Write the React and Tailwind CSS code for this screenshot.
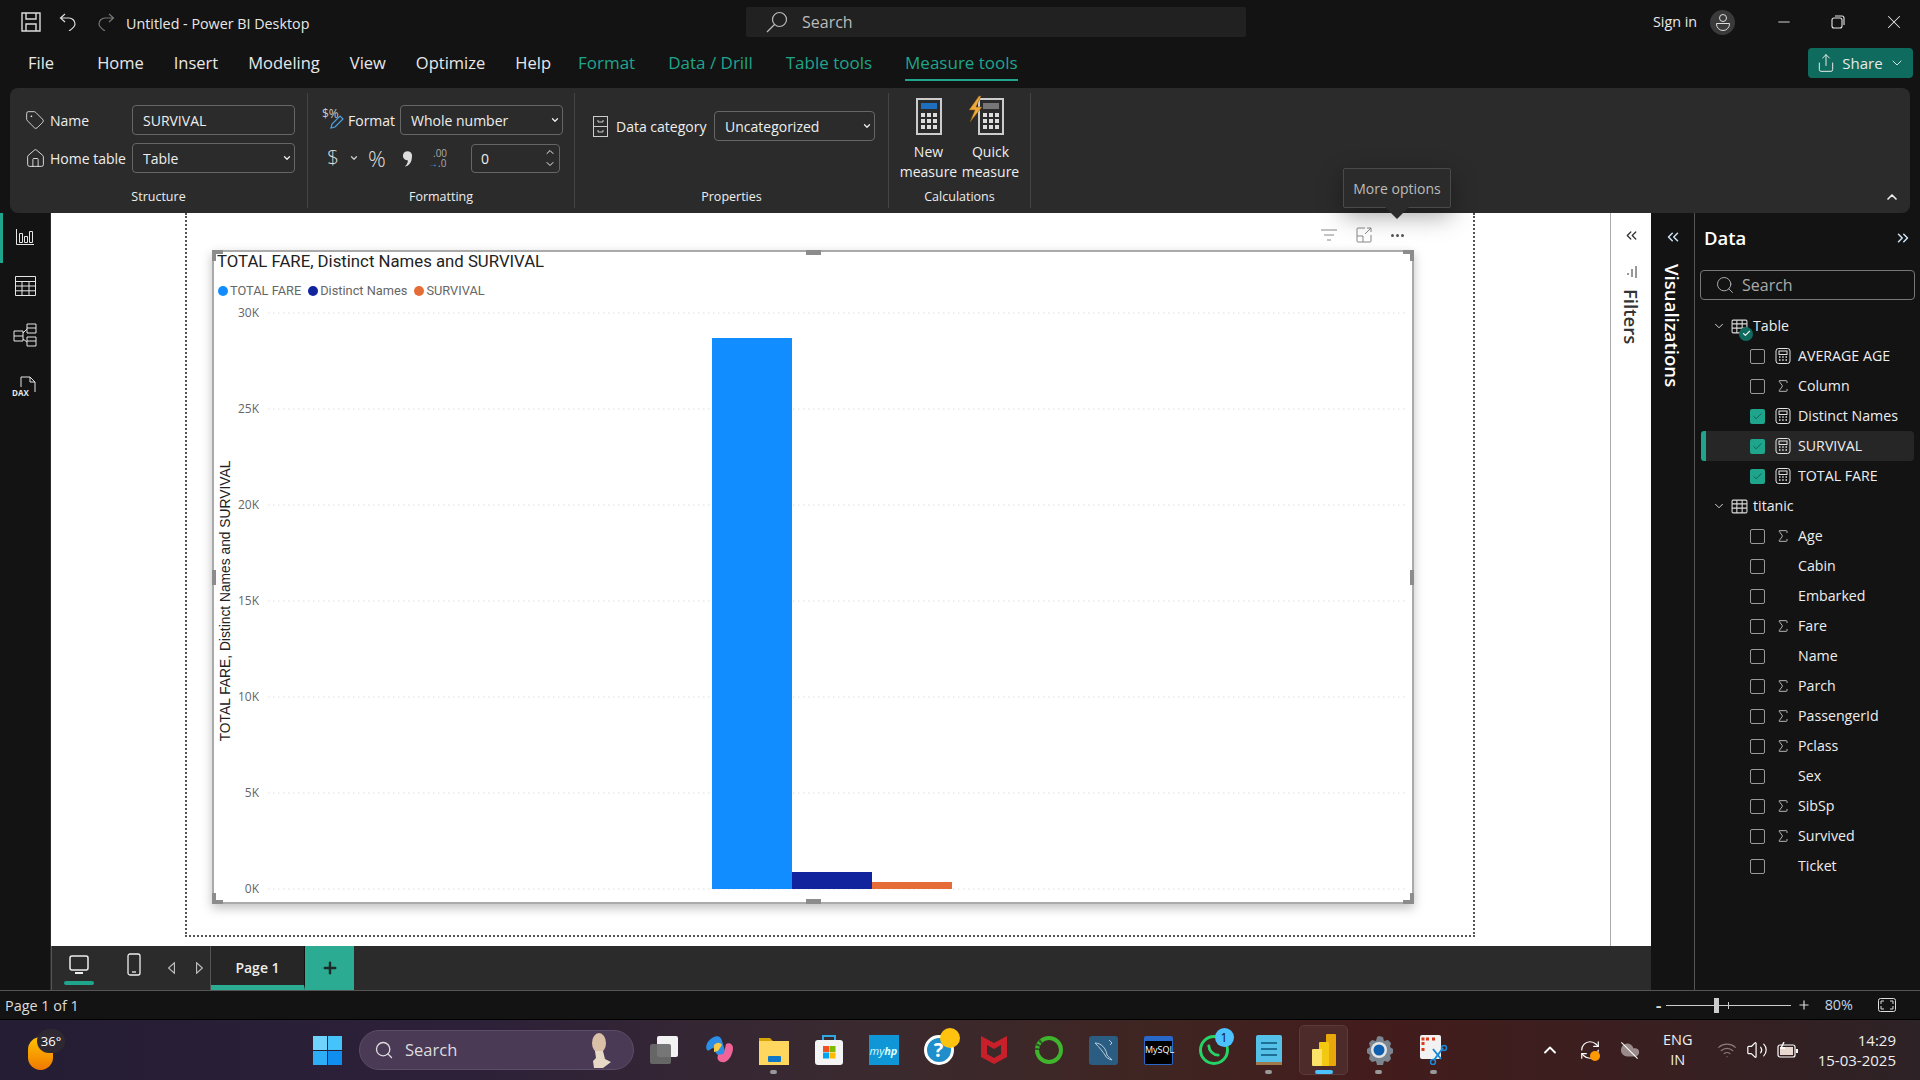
import { Search, X, Minus, ChevronDown, ChevronUp, ChevronsLeft, ChevronsRight, Tag, Home, Share, Sigma, Plus, Check, Wifi, Volume2, RefreshCw, Cloud } from 'lucide-react';

const FONT = { fontFamily: '"Open Sans", "Noto Sans", sans-serif' };

const tables = [
  {
    name: 'Table', check: true, fields: [
      { name: 'AVERAGE AGE', icon: 'calc' },
      { name: 'Column', icon: 'sum' },
      { name: 'Distinct Names', icon: 'calc', on: true },
      { name: 'SURVIVAL', icon: 'calc', on: true, selected: true },
      { name: 'TOTAL FARE', icon: 'calc', on: true },
    ],
  },
  {
    name: 'titanic', fields: [
      { name: 'Age', icon: 'sum' }, { name: 'Cabin' }, { name: 'Embarked' }, { name: 'Fare', icon: 'sum' }, { name: 'Name' },
      { name: 'Parch', icon: 'sum' }, { name: 'PassengerId', icon: 'sum' }, { name: 'Pclass', icon: 'sum' }, { name: 'Sex' },
      { name: 'SibSp', icon: 'sum' }, { name: 'Survived', icon: 'sum' }, { name: 'Ticket' },
    ],
  },
];

const gridLines = [['30K', 11], ['25K', 107], ['20K', 203], ['15K', 299], ['10K', 395], ['5K', 491], ['0K', 587]];

function TableIcon({ className }) {
  return (
    <svg viewBox="0 0 16 16" className={className} fill="none" stroke="currentColor" strokeWidth="1">
      <rect x="1" y="2" width="14" height="12" rx="1" />
      <path d="M1 5.5h14M1 9.5h14M5.5 2v12M10.5 2v12" />
    </svg>
  );
}

function CalcIcon() {
  return (
    <svg viewBox="0 0 16 16" className="w-4 h-4 text-[#e4e4e4]" fill="none" stroke="currentColor" strokeWidth="1">
      <rect x="1" y="0.5" width="14" height="15" rx="2.5" />
      <rect x="4" y="3" width="8" height="3.5" />
      <path d="M4 9h1.5M7.2 9h1.5M10.5 9h1.5M4 12h1.5M7.2 12h1.5M10.5 12h1.5" strokeWidth="1.5" />
    </svg>
  );
}

function Chevron({ className = '' }) {
  return <ChevronDown size={10} strokeWidth={3} className={className} />;
}

function Select({ text, className }) {
  return (
    <div className={`h-[30px] flex items-center justify-between pl-[10px] pr-[2px] border border-[#666] rounded-[4px] text-[14px] text-[#eee] ${className}`}>
      <span>{text}</span>
      <Chevron />
    </div>
  );
}

function RibbonGroup({ label, className, children }) {
  return (
    <div className={`flex flex-col border-r border-[#444] my-[5px] ${className}`}>
      <div className="flex-1">{children}</div>
      <div className="text-center text-[12.5px] text-[#eee] h-[20px] leading-[20px] mb-[1px]">{label}</div>
    </div>
  );
}

function CalcLarge({ quick }) {
  return (
    <svg viewBox="0 0 34 38" className="w-[34px] h-[38px] overflow-visible">
      <rect x="5" y="1" width="24" height="35" fill="#2b2b2b" stroke="#ccc" strokeWidth="2" />
      <rect x="9" y="5" width="16" height="6" fill={quick ? '#777' : '#1e70bf'} />
      {[15, 21, 27].map(y => [0, 6, 12].map(x => <rect key={`${x}-${y}`} x={9 + x} y={y} width="4" height="4" fill="#ddd" />))}
      {quick && <path d="M5 -2 L-5 12 L1 12 L-4 24 L8 9 L2 9 L7 -2 Z" fill="#f0a83a" stroke="#7a5210" strokeWidth="0.5" />}
    </svg>
  );
}

function TitleBar() {
  return (
    <div className="h-[44px] flex items-center text-[#e8e8e8]">
      <svg viewBox="0 0 20 20" className="w-[20px] h-[20px] ml-[21px] text-[#ddd]" fill="none" stroke="currentColor" strokeWidth="1.4">
        <path d="M1 1h18v18H1z" />
        <path d="M5 1v6h10V1M5 19v-7h10v7" />
      </svg>
      <svg viewBox="0 0 18 18" className="w-[18px] h-[18px] ml-[18px] text-[#ddd]" fill="none" stroke="currentColor" strokeWidth="1.2">
        <path d="M6 1 1.5 5 6 9M1.5 5H10a6 6 0 0 1 6 6c0 3-3 5-6 7" />
      </svg>
      <svg viewBox="0 0 18 18" className="w-[18px] h-[18px] ml-[20px] text-[#777] -scale-x-100" fill="none" stroke="currentColor" strokeWidth="1.2">
        <path d="M6 1 1.5 5 6 9M1.5 5H10a6 6 0 0 1 6 6c0 3-3 5-6 7" />
      </svg>
      <span className="ml-[11px] w-[201px] text-[14.3px] pt-[4px]">Untitled - Power BI Desktop</span>
      <div className="ml-[419px] w-[500px] h-[30px] bg-[#212121] rounded-[2px] flex items-center pl-[20px] text-[16px] text-[#bbb]">
        <svg viewBox="0 0 22 22" className="w-[22px] h-[22px]" fill="none" stroke="currentColor" strokeWidth="1.2">
          <circle cx="13.5" cy="8.5" r="7" />
          <path d="M8.5 13.5 1 21" />
        </svg>
        <span className="ml-[14px]">Search</span>
      </div>
      <span className="ml-[407px] text-[14.3px]">Sign in</span>
      <div className="ml-[13px] w-[25px] h-[25px] rounded-full bg-[#3a3a3a] flex flex-col items-center justify-center text-[#ddd]">
        <div className="w-[8px] h-[8px] rounded-full border border-[#ddd]" />
        <div className="w-[14px] h-[8px] rounded-b-full border border-[#ddd] mt-[1px]" />
      </div>
      <Minus size={18} strokeWidth={1.2} className="ml-[40px]" />
      <svg viewBox="0 0 14 14" className="w-[14px] h-[14px] ml-[38px]" fill="none" stroke="currentColor" strokeWidth="1.1">
        <rect x="1" y="3" width="10" height="10" rx="2" />
        <path d="M4 1h7a2 2 0 0 1 2 2v7" />
      </svg>
      <X size={22} strokeWidth={1.1} className="ml-[38px]" />
    </div>
  );
}

function TabRow() {
  const plain = ['Home', 'Insert', 'Modeling', 'View', 'Optimize', 'Help'];
  const context = ['Data / Drill', 'Table tools'];
  return (
    <div className="h-[44px] flex items-center text-[16.5px] text-[#e8e8e8] pb-[6px]">
      <span className="ml-[28px] mr-[43px]">File</span>
      <div className="flex items-center gap-[30px]">
        {plain.map(t => <span key={t}>{t}</span>)}
      </div>
      <div className="flex items-center gap-[33px] ml-[27px] text-[17px] font-medium text-[#1fa58c]">
        <span>Format</span>
        {context.map(t => <span key={t}>{t}</span>)}
        <span className="relative">
          Measure tools
          <span className="absolute left-0 right-0 -bottom-[5px] h-[2px] bg-[#1fa58c]" />
        </span>
      </div>
      <div className="ml-auto mr-[7px] w-[105px] h-[30px] bg-[#0e6b5d] rounded-[4px] flex items-center justify-center gap-[6px] text-[15px] font-normal">
        <Share size={20} strokeWidth={1.2} />
        <span>Share</span>
        <ChevronDown size={16} strokeWidth={1.4} />
      </div>
    </div>
  );
}

function Ribbon() {
  return (
    <div className="h-[125px] mx-[10px] bg-[#2b2b2b] rounded-[8px] flex text-[14px] text-[#eee]">
      <RibbonGroup label="Structure" className="w-[298px]">
        <div className="pt-[12px] pl-[15px] flex flex-col gap-[8px]">
          <div className="flex items-center h-[30px]">
            <Tag size={20} strokeWidth={1} />
            <span className="ml-[5px] w-[82px]">Name</span>
            <div className="w-[163px] h-[30px] border border-[#666] rounded-[4px] pl-[10px] leading-[30px]">SURVIVAL</div>
          </div>
          <div className="flex items-center h-[30px]">
            <Home size={21} strokeWidth={1} />
            <span className="ml-[4px] w-[82px]">Home table</span>
            <Select text="Table" className="w-[163px]" />
          </div>
        </div>
      </RibbonGroup>
      <RibbonGroup label="Formatting" className="w-[267px]">
        <div className="pt-[12px] flex flex-col gap-[8px]">
          <div className="flex items-center h-[30px] pl-[14px]">
            <span className="relative w-[22px] h-[24px] text-[12px] leading-[14px] text-[#ccc] -mt-[3px]">
              $%
              <svg viewBox="0 0 14 14" className="absolute left-[8px] top-[8px] w-[14px] h-[14px]" fill="none" stroke="#4ba3e3" strokeWidth="1.2">
                <path d="M1 13l1-4 8-8 3 3-8 8z" />
              </svg>
            </span>
            <span className="ml-[4px] w-[52px]">Format</span>
            <Select text="Whole number" className="w-[163px]" />
          </div>
          <div className="flex items-center h-[30px] pl-[19px]">
            <span className="text-[21px] w-[22px] font-light text-[#ddd]">$</span>
            <Chevron className="text-[#ccc]" />
            <span className="ml-[9px] text-[22px] w-[34px] font-light text-[#ddd]">%</span>
            <svg viewBox="0 0 12 18" className="w-[11px] h-[17px] text-[#ddd]" fill="currentColor">
              <circle cx="6" cy="6" r="5" />
              <path d="M10.5 7C11.5 13 7 17 3 18 6 15 7 12 6 10z" />
            </svg>
            <div className="ml-[15px] w-[43px] text-[10px] leading-[10px] text-[#aaa] flex flex-col">
              <span className="pl-[5px]">.00</span>
              <span><span className="text-[#4ba3e3]">→</span>.0</span>
            </div>
            <div className="w-[89px] h-[29px] border border-[#666] rounded-[4px] pl-[9px] pr-[3px] flex items-center justify-between">
              <span>0</span>
              <div className="flex flex-col">
                <ChevronUp size={12} strokeWidth={2} />
                <ChevronDown size={12} strokeWidth={2} />
              </div>
            </div>
          </div>
        </div>
      </RibbonGroup>
      <RibbonGroup label="Properties" className="w-[314px]">
        <div className="pt-[18px] pl-[18px] flex items-center">
          <svg viewBox="0 0 15 21" className="w-[15px] h-[21px] text-[#ccc]" fill="none" stroke="currentColor" strokeWidth="1">
            <rect x="0.5" y="0.5" width="14" height="20" />
            <path d="M0.5 10.5h14M5 4v2h5V4M5 14v2h5v-2" />
          </svg>
          <span className="ml-[8px] w-[98px]">Data category</span>
          <Select text="Uncategorized" className="w-[161px]" />
        </div>
      </RibbonGroup>
      <RibbonGroup label="Calculations" className="w-[142px]">
        <div className="flex justify-center gap-[4px] pt-[5px] text-center leading-[20px]">
          <div className="w-[58px] flex flex-col items-center">
            <CalcLarge />
            <span className="mt-[6px]">New measure</span>
          </div>
          <div className="w-[58px] flex flex-col items-center">
            <CalcLarge quick />
            <span className="mt-[6px]">Quick measure</span>
          </div>
        </div>
      </RibbonGroup>
      <div className="flex-1 flex items-end justify-end pr-[10px] pb-[8px]">
        <ChevronUp size={16} strokeWidth={2.5} />
      </div>
    </div>
  );
}

function LeftRail() {
  return (
    <div className="w-[51px] flex flex-col text-[#e6e6e6] border-r border-[#2c2c2c]">
      <div className="h-[50px] border-l-[3px] border-[#1fa58c] flex items-center justify-center pr-[3px] pb-[2px]">
        <svg viewBox="0 0 18 16" className="w-[18px] h-[16px]" fill="none" stroke="currentColor">
          <path d="M0.5 0v15.5H18M3.5 4.5h3v9h-3zM8.5 7.5h3v6h-3zM13.5 2.5h3v11h-3z" />
        </svg>
      </div>
      <div className="h-[46px] flex items-center justify-center">
        <svg viewBox="0 0 21 20" className="w-[21px] h-[20px]" fill="none" stroke="currentColor">
          <path d="M0.5 0.5h20v19h-20zM0.5 5.5h20M0.5 10h20M0.5 14.8h20M7 5.5v14M14 5.5v14" />
        </svg>
      </div>
      <div className="h-[52px] flex items-center justify-center">
        <svg viewBox="0 0 24 24" className="w-[24px] h-[24px]" fill="none" stroke="currentColor">
          <path d="M1 8h9v10H1zM1 13h9M14 1h9v9h-9zM14 5h9M14 14h9v9h-9zM14 18h9M10 10l4-4M10 16l4 3" />
        </svg>
      </div>
      <div className="h-[50px] flex items-center justify-center relative">
        <svg viewBox="0 0 20 20" className="w-[20px] h-[20px] ml-[4px]" fill="none" stroke="currentColor">
          <path d="M4 11V1h9l5 5v10M13 1v5h5" />
        </svg>
        <span className="absolute left-[12px] top-[28px] text-[8px] font-bold leading-none">DAX</span>
      </div>
    </div>
  );
}

function BarChart() {
  return (
    <svg width="1198" height="600" className="block">
      <text x="12" y="299" transform="rotate(-90 12 299)" textAnchor="middle" dominantBaseline="middle" fontFamily="Liberation Sans" fontSize="13.8" fill="#222">TOTAL FARE, Distinct Names and SURVIVAL</text>
      {gridLines.map(([label, y]) => (
        <g key={label}>
          <text x="45" y={y + 4} textAnchor="end" fontFamily="Open Sans" fontSize="12" fill="#666">{label}</text>
          <line x1="54" x2="1192" y1={y} y2={y} stroke="#ddd" strokeDasharray="1.5 3.5" />
        </g>
      ))}
      <rect x="498" y="36" width="80" height="551" fill="#118dff" />
      <rect x="578" y="570" width="80" height="17" fill="#12239e" />
      <rect x="658" y="580" width="80" height="7" fill="#e66c37" />
    </svg>
  );
}

function Handle({ className }) {
  return <div className={`absolute bg-[#8c8c8c] ${className}`} />;
}

function Canvas() {
  return (
    <div className="flex-1 bg-white relative overflow-hidden">
      <div className="ml-[134px] w-[1290px] h-[724px] border-x-2 border-b-2 border-dotted border-[#555]">
        <div className="h-[37px] flex items-end justify-end pr-[69px] pb-[7px] gap-[19px] text-[#888]">
          <svg viewBox="0 0 16 12" className="w-[16px] h-[12px] mb-[2px]" stroke="currentColor" fill="none">
            <path d="M0 1h16M3 6h10M6 11h4" />
          </svg>
          <svg viewBox="0 0 16 16" className="w-[16px] h-[16px]" stroke="currentColor" fill="none">
            <path d="M9 1H2a1 1 0 0 0-1 1v12a1 1 0 0 0 1 1h12a1 1 0 0 0 1-1V8M1 9h6v6M9 7l6-6M11 1h4v4" />
          </svg>
          <div className="flex gap-[2px] mb-[6px]">
            <span className="w-[3px] h-[3px] rounded-full bg-[#555]" />
            <span className="w-[3px] h-[3px] rounded-full bg-[#555]" />
            <span className="w-[3px] h-[3px] rounded-full bg-[#555]" />
          </div>
        </div>
        <div className="ml-[25px] w-[1202px] h-[654px] border-2 border-[#aaa] relative shadow-[0_4px_10px_rgba(0,0,0,0.25)] bg-white">
          <div className="h-[20px] pl-[3px] text-[16.75px] leading-[18px] text-[#222]" style={{ fontFamily: 'Roboto, sans-serif' }}>TOTAL FARE, Distinct Names and SURVIVAL</div>
          <div className="mt-[8px] h-[22px] pl-[4px] flex items-center gap-[6px] text-[12.8px] text-[#666]" style={{ fontFamily: 'Roboto, sans-serif' }}>
            <div className="flex items-center gap-[2px]"><span className="w-[10px] h-[10px] rounded-full bg-[#118dff]" />TOTAL FARE</div>
            <div className="flex items-center gap-[2px] ml-[1px]"><span className="w-[10px] h-[10px] rounded-full bg-[#12239e]" />Distinct Names</div>
            <div className="flex items-center gap-[2px] ml-[1px]"><span className="w-[10px] h-[10px] rounded-full bg-[#e66c37]" />SURVIVAL</div>
          </div>
          <BarChart />
          <Handle className="-left-[2px] -top-[2px] w-[11px] h-[4px]" />
          <Handle className="-left-[2px] -top-[2px] w-[4px] h-[11px]" />
          <Handle className="-right-[2px] -top-[2px] w-[11px] h-[4px]" />
          <Handle className="-right-[2px] -top-[2px] w-[4px] h-[11px]" />
          <Handle className="-left-[2px] -bottom-[2px] w-[11px] h-[4px]" />
          <Handle className="-left-[2px] -bottom-[2px] w-[4px] h-[11px]" />
          <Handle className="-right-[2px] -bottom-[2px] w-[11px] h-[4px]" />
          <Handle className="-right-[2px] -bottom-[2px] w-[4px] h-[11px]" />
          <Handle className="left-[592px] -top-[2px] w-[15px] h-[5px]" />
          <Handle className="left-[592px] -bottom-[2px] w-[15px] h-[5px]" />
          <Handle className="-left-[2px] top-[318px] w-[4px] h-[15px]" />
          <Handle className="-right-[2px] top-[318px] w-[4px] h-[15px]" />
        </div>
      </div>
    </div>
  );
}

function FiltersPane() {
  return (
    <div className="w-[41px] bg-white border-l border-[#aaa] flex flex-col items-center text-[#333]">
      <ChevronsLeft size={17} strokeWidth={1.8} className="mt-[14px]" />
      <svg viewBox="0 0 12 12" className="w-[12px] h-[12px] mt-[22px]" stroke="currentColor" fill="none">
        <path d="M11 0v12M7 3v8M3 7v2" />
      </svg>
      <span className="mt-[11px] text-[18.5px] leading-[24px] font-semibold [writing-mode:vertical-rl]">Filters</span>
    </div>
  );
}

function VizPane() {
  return (
    <div className="w-[44px] flex flex-col items-center border-r border-[#555] text-white">
      <ChevronsLeft size={18} strokeWidth={2} className="mt-[15px] text-[#cfe3f5]" />
      <span className="mt-[18px] mr-[2px] text-[18.6px] leading-[26px] font-semibold [writing-mode:vertical-rl]">Visualizations</span>
    </div>
  );
}

function FieldRow({ field }) {
  return (
    <div className={`h-[30px] w-[213px] ml-[6px] flex items-center rounded-r-[4px] ${field.selected ? 'bg-[#262626] border-l-[5px] border-[#1fa58c] rounded-l-[3px] pl-[44px]' : 'pl-[49px]'}`}>
      {field.on
        ? <span className="w-[15px] h-[15px] rounded-[2px] bg-[#1fa58c] flex items-center justify-center text-[#0e5e50]"><Check size={11} strokeWidth={2} /></span>
        : <span className="w-[15px] h-[15px] rounded-[2px] border border-[#999]" />}
      <span className="w-[16px] ml-[10px] flex items-center justify-center">
        {field.icon === 'calc' && <CalcIcon />}
        {field.icon === 'sum' && <Sigma size={20} strokeWidth={1.2} className="text-[#ddd]" />}
      </span>
      <span className="ml-[7px] text-[14.2px] text-[#eee]">{field.name}</span>
    </div>
  );
}

function DataPane() {
  return (
    <div className="flex-1 text-white">
      <div className="h-[50px] flex items-center justify-between pl-[9px] pr-[8px] pb-[1px]">
        <span className="text-[18.5px] font-semibold">Data</span>
        <ChevronsRight size={18} strokeWidth={2} className="text-[#cfe3f5]" />
      </div>
      <div className="ml-[5px] mt-[7px] w-[215px] h-[30px] border border-[#777] rounded-[4px] flex items-center pl-[14px] text-[16px] text-[#aaa]">
        <Search size={20} strokeWidth={1.2} />
        <span className="ml-[7px]">Search</span>
      </div>
      <div className="mt-[11px]">
        {tables.map(t => (
          <div key={t.name}>
            <div className="h-[30px] flex items-center pl-[17px] text-[14.2px] text-[#eee]">
              <ChevronDown size={14} strokeWidth={1.5} />
              <span className="relative ml-[5px] w-[17px]">
                <TableIcon className="w-[17px] h-[17px] text-[#ddd] block" />
                {t.check && (
                  <span className="absolute left-[8px] top-[9px] w-[14px] h-[14px] rounded-full bg-[#0e6b5d] flex items-center justify-center">
                    <Check size={9} strokeWidth={3} />
                  </span>
                )}
              </span>
              <span className="ml-[5px]">{t.name}</span>
            </div>
            {t.fields.map(f => <FieldRow key={f.name} field={f} />)}
          </div>
        ))}
      </div>
    </div>
  );
}

function TabBar() {
  return (
    <div className="h-[44px] bg-[#2b2b2b] border-l border-[#555] flex text-[#eee]">
      <div className="w-[159px] flex items-center border-r border-[#555]">
        <div className="w-[30px] ml-[12px] flex flex-col items-center pt-[9px] h-full">
          <svg viewBox="0 0 20 20" className="w-[20px] h-[20px]" fill="none" stroke="currentColor" strokeWidth="1.5">
            <rect x="1" y="1" width="18" height="14" rx="2" />
            <path d="M6 18h8" strokeWidth="2" />
          </svg>
          <span className="mt-[6px] w-[30px] h-[4px] rounded-full bg-[#1fa58c]" />
        </div>
        <svg viewBox="0 0 14 23" className="ml-[33px] w-[14px] h-[23px] -mt-[7px]" fill="none" stroke="currentColor" strokeWidth="1.3">
          <rect x="1" y="1" width="12" height="21" rx="2" />
          <path d="M5 19h4" />
        </svg>
        <svg viewBox="0 0 6 10" className="ml-[27px] w-[7px] h-[12px] text-[#bbb]" fill="none" stroke="currentColor"><path d="M5.5 0.5v9L0.5 5z" /></svg>
        <svg viewBox="0 0 6 10" className="ml-[21px] w-[7px] h-[12px] text-[#bbb]" fill="none" stroke="currentColor"><path d="M0.5 0.5v9L5.5 5z" /></svg>
      </div>
      <div className="w-[94px] bg-[#262626] border-b-[5px] border-[#2aab92] border-r border-r-[#111] flex items-center justify-center text-[14px] font-semibold pt-[3px]">Page 1</div>
      <div className="w-[49px] bg-[#2aab92] flex items-center justify-center text-[#1c2b28]">
        <Plus size={18} strokeWidth={3.2} />
      </div>
    </div>
  );
}

function StatusBar() {
  return (
    <div className="h-[30px] border-t border-[#555] border-b border-b-[#000] flex items-center pl-[5px] text-[14.4px] text-[#ddd]">
      <span className="pt-[1px]">Page 1 of 1</span>
      <span className="ml-auto text-[18px] leading-none font-semibold">-</span>
      <div className="ml-[4px] w-[125px] h-[1px] bg-[#ccc] relative">
        <span className="absolute left-[48px] -top-[7px] w-[5px] h-[15px] bg-[#ccc]" />
        <span className="absolute left-[62px] -top-[3px] w-[1px] h-[7px] bg-[#ccc]" />
      </div>
      <Plus size={14} strokeWidth={2} className="ml-[6px]" />
      <span className="ml-[14px] text-[#c4d4e4]">80%</span>
      <svg viewBox="0 0 18 14" className="ml-[25px] mr-[24px] w-[18px] h-[14px]" fill="none" stroke="currentColor">
        <rect x="0.5" y="0.5" width="17" height="13" rx="2" />
        <path d="M3 6V3h3M12 3h3v3M15 8v3h-3M6 11H3V8" />
      </svg>
    </div>
  );
}

function AppIcon({ dot, children, bar }) {
  return (
    <div className="w-[55px] h-[60px] flex flex-col items-center pt-[14px] relative">
      <div className="w-[32px] h-[32px] flex items-center justify-center">{children}</div>
      {dot && <span className="mt-[4px] w-[7px] h-[4px] rounded-full bg-[#999]" />}
      {bar && <span className="mt-[4px] w-[18px] h-[4px] rounded-full bg-[#4cc2ff]" />}
    </div>
  );
}

function Taskbar() {
  return (
    <div className="h-[60px] bg-[linear-gradient(90deg,#241d33_0%,#2d2139_25%,#3a2a2f_45%,#3f2522_60%,#431c1c_72%,#3a1f20_85%,#2d2226_100%)] flex items-center text-white">
      <div className="w-[313px] pl-[28px] relative h-full flex items-center">
        <span className="w-[25px] h-[33px] rounded-full bg-[linear-gradient(180deg,#ffc400,#f07800)] mt-[6px]" />
        <span className="absolute left-[37px] top-[9px] w-[28px] h-[24px] rounded-full bg-[#2e2833] text-[13px] text-center leading-[24px]">36°</span>
      </div>
      <div className="w-[29px] h-[29px] grid grid-cols-2 gap-[1px]">
        <span className="bg-[#6fd3fb]" /><span className="bg-[#45c4fb]" /><span className="bg-[#2eaef5]" /><span className="bg-[#0f8eef]" />
      </div>
      <div className="ml-[17px] w-[275px] h-[40px] rounded-full bg-[#4a3a55] border border-[#5c4d66] flex items-center pl-[14px] text-[16.5px] text-[#ddd]">
        <Search size={20} strokeWidth={1.6} />
        <span className="ml-[11px]">Search</span>
        <svg viewBox="0 0 24 36" className="ml-auto mr-[21px] w-[24px] h-[36px]">
          <ellipse cx="11" cy="11" rx="7" ry="10" fill="#d9c0a6" />
          <path d="M7 19h8l2 8 6 3-8 6H6l-1-7 3-3z" fill="#e8d8c6" />
        </svg>
      </div>
      <div className="ml-[2px] flex">
        <AppIcon>
          <svg viewBox="0 0 30 30" className="w-[30px] h-[30px]">
            <rect x="8" y="1" width="21" height="21" rx="2" fill="#f2f2f2" />
            <rect x="1" y="9" width="21" height="20" rx="2" fill="#6b6b6b" opacity="0.92" />
          </svg>
        </AppIcon>
        <AppIcon>
          <svg viewBox="0 0 30 30" className="w-[30px] h-[30px]">
            <path d="M8 3c5-3 9-2 10 3l3 10c1 4-3 6-7 4-3-2-3-6-5-7-2 0-4 4-6 2C1 12 3 6 8 3z" fill="#2b8fe8" />
            <path d="M14 20c-2 5 2 8 7 7 5-2 8-9 8-14 0-4-4-6-7-4l-2 9c-1 2-4 1-6 2z" fill="#f0649a" />
            <path d="M10 10c3-3 6-3 8 0l-4 6-4 1z" fill="#f6c94a" />
          </svg>
        </AppIcon>
        <AppIcon dot>
          <svg viewBox="0 0 30 30" className="w-[30px] h-[30px]">
            <path d="M0 3h11l3 3h16v5H0z" fill="#d9a406" />
            <rect x="0" y="6" width="30" height="24" fill="#ffd75e" />
            <rect x="9" y="21" width="13" height="6" rx="1" fill="#0f78c8" />
          </svg>
        </AppIcon>
        <AppIcon>
          <svg viewBox="0 0 30 30" className="w-[30px] h-[30px]">
            <path d="M9 5V1h12v4" fill="none" stroke="#2fa8e0" strokeWidth="2" />
            <rect x="1" y="5" width="28" height="25" rx="3" fill="#f4f4f4" />
            <rect x="9" y="11" width="6" height="6" fill="#f25022" />
            <rect x="15.5" y="11" width="6" height="6" fill="#7fba00" />
            <rect x="9" y="17.5" width="6" height="6" fill="#00a4ef" />
            <rect x="15.5" y="17.5" width="6" height="6" fill="#ffb900" />
          </svg>
        </AppIcon>
        <AppIcon>
          <div className="w-[30px] h-[30px] bg-[#0f96d6] flex items-center justify-center text-[11px] italic text-[#dff] leading-none">my<b>hp</b></div>
        </AppIcon>
        <AppIcon>
          <div className="relative w-[30px] h-[30px] rounded-full bg-[#1f8ecb] border-[3px] border-white flex items-center justify-center font-bold text-[20px]">
            ?
            <span className="absolute -right-[9px] -top-[10px] w-[20px] h-[20px] rounded-full bg-[#ffc20e]" />
          </div>
        </AppIcon>
        <AppIcon>
          <svg viewBox="0 0 28 30" className="w-[28px] h-[30px]">
            <path d="M1 1l13 7 13-7v21l-13 7-13-7z" fill="#c8202a" />
            <path d="M7 10l7 4 7-4v9l-7 4-7-4z" fill="#3a2a2a" />
          </svg>
        </AppIcon>
        <AppIcon>
          <svg viewBox="0 0 30 30" className="w-[30px] h-[30px]">
            <circle cx="15" cy="15" r="12" fill="none" stroke="#3fb52d" strokeWidth="4" />
            <path d="M3 15a12 12 0 0 1 6-10" fill="none" stroke="#2a5a24" strokeWidth="4" strokeDasharray="2 2" />
          </svg>
        </AppIcon>
        <AppIcon>
          <div className="w-[29px] h-[29px] rounded-[3px] bg-[#2b5d82] flex items-center justify-center">
            <svg viewBox="0 0 24 24" className="w-[24px] h-[24px]" fill="none" stroke="#b9cfdd" strokeWidth="1">
              <path d="M3 5c6 0 11 5 12 12 1 2 4 3 5 5-3-1-6-2-7-5-2-3-5-7-10-12z" />
              <path d="M17 2l3 3-2 2" />
            </svg>
          </div>
        </AppIcon>
        <AppIcon>
          <div className="w-[29px] h-[29px] rounded-[2px] bg-black border-t-[5px] border-[#2868c8] border-x border-b border-x-[#2868c8] border-b-[#2868c8] text-[9px] text-white leading-[18px] text-center">MySQL</div>
        </AppIcon>
        <AppIcon>
          <div className="relative w-[30px] h-[30px] rounded-full border-[3px] border-[#25d366] flex items-center justify-center">
            <svg viewBox="0 0 16 16" className="w-[15px] h-[15px]" fill="none" stroke="#25d366" strokeWidth="3" strokeLinecap="round">
              <path d="M3 3c0 5 5 10 10 10" />
            </svg>
            <span className="absolute -right-[8px] -top-[10px] w-[19px] h-[19px] rounded-full bg-[#4cc2ff] text-[#111] text-[12px] text-center leading-[19px]">1</span>
          </div>
        </AppIcon>
        <AppIcon dot>
          <div className="w-[26px] h-[30px] rounded-t-[2px] bg-[#55c0e8] border-b-[3px] border-[#a07a4a] flex flex-col justify-center gap-[4px] px-[5px]">
            <span className="h-[2px] bg-[#1d6f96]" /><span className="h-[2px] bg-[#1d6f96]" /><span className="h-[2px] bg-[#1d6f96]" />
          </div>
        </AppIcon>
        <div className="relative">
          <div className="absolute left-[3px] top-[5px] w-[49px] h-[50px] rounded-[5px] bg-[#4e2b2b] border border-[#5a3a3a]" />
          <AppIcon bar>
            <svg viewBox="0 0 24 32" className="w-[24px] h-[32px] relative">
              <rect x="14" y="0" width="10" height="32" rx="1" fill="#e8a80c" />
              <rect x="7" y="8" width="10" height="24" rx="1" fill="#f2c811" />
              <rect x="0" y="15" width="10" height="17" rx="1" fill="#fde26a" />
            </svg>
          </AppIcon>
        </div>
        <AppIcon dot>
          <svg viewBox="0 0 30 30" className="w-[30px] h-[30px]">
            <path d="M15 1l4 1 1 4 4-1 3 3-1 4 3 2v4l-3 2 1 4-3 3-4-1-1 4h-6l-1-4-4 1-3-3 1-4-3-2v-4l3-2-1-4 3-3 4 1 1-4z" fill="#7a8590" />
            <circle cx="15" cy="15" r="8" fill="#e5e5e5" />
            <circle cx="15" cy="15" r="5.5" fill="#0f5fb0" />
          </svg>
        </AppIcon>
        <AppIcon dot>
          <svg viewBox="0 0 30 30" className="w-[30px] h-[30px]">
            <rect x="1" y="0" width="21" height="24" rx="2" fill="#f2f2f2" />
            <path d="M4 10V4h6M13 4h3M4 13v3" stroke="#d93a1a" strokeWidth="3" fill="none" strokeDasharray="3 1.5" />
            <path d="M14 14l8 10M24 13l-9 12" stroke="#1a8ad8" strokeWidth="2" />
            <circle cx="25" cy="13" r="2.5" fill="none" stroke="#1a8ad8" strokeWidth="1.5" />
            <circle cx="14" cy="27" r="2.5" fill="none" stroke="#1a8ad8" strokeWidth="1.5" />
          </svg>
        </AppIcon>
      </div>
      <div className="ml-auto pr-[24px] flex items-center h-full">
        <ChevronUp size={20} strokeWidth={2.2} />
        <div className="relative ml-[19px]">
          <RefreshCw size={22} strokeWidth={1.3} />
          <span className="absolute left-[11px] top-[12px] w-[10px] h-[10px] rounded-full bg-[#ff9900]" />
        </div>
        <div className="relative ml-[18px]">
          <Cloud size={22} fill="#9a8a8a" strokeWidth={0} />
          <span className="absolute left-[10px] top-0 w-[1px] h-[23px] bg-white -rotate-45" />
        </div>
        <div className="ml-[17px] w-[40px] text-center text-[14.5px] leading-[20px] text-[#eee]">ENG<br />IN</div>
        <Wifi size={20} strokeWidth={1.4} className="ml-[19px] text-[#8a7a7a]" />
        <Volume2 size={22} strokeWidth={1.3} className="ml-[9px]" />
        <svg viewBox="0 0 22 16" className="ml-[9px] w-[22px] h-[16px]" fill="none" stroke="#fff" strokeWidth="1.2">
          <rect x="1" y="3" width="17" height="12" rx="2" />
          <rect x="3" y="5" width="13" height="8" fill="#e8d8d0" stroke="none" />
          <path d="M20 7v4" strokeWidth="2" />
          <path d="M7 0L4 6h4" strokeWidth="1.4" />
        </svg>
        <div className="ml-[19px] text-right text-[15px] leading-[20px] text-[#eee]">14:29<br />15-03-2025</div>
      </div>
    </div>
  );
}

export default function App() {
  return (
    <div className="w-[1920px] h-[1080px] bg-[#131313] flex flex-col overflow-hidden relative" style={FONT}>
      <TitleBar />
      <TabRow />
      <Ribbon />
      <div className="h-[777px] flex">
        <LeftRail />
        <div className="w-[1600px] flex flex-col">
          <div className="flex-1 flex min-h-0">
            <Canvas />
            <FiltersPane />
          </div>
          <TabBar />
        </div>
        <VizPane />
        <DataPane />
      </div>
      <StatusBar />
      <Taskbar />
      <div className="absolute left-[1343px] top-[168px] w-[108px] h-[40px] bg-[#2b2b2b] border border-[#4a4a4a] rounded-[2px] text-[14px] text-[#bbb] flex items-center justify-center shadow-[0_8px_24px_rgba(0,0,0,0.35)]">
        More options
        <span className="absolute left-[41px] top-[38px] w-0 h-0 border-x-[12px] border-x-transparent border-t-[12px] border-t-[#2b2b2b]" />
      </div>
    </div>
  );
}
